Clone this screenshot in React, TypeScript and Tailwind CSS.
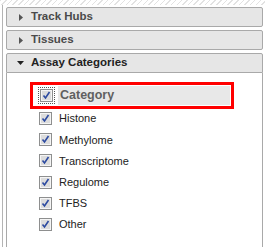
import React from 'react';

const Check: React.FC = () => (
  <svg width="13" height="13" viewBox="0 0 13 13" className="shrink-0">
    <rect x="0.5" y="0.5" width="12" height="12" fill="#f4f4f4" stroke="#8e8f8f" />
    <rect x="1.5" y="1.5" width="10" height="10" fill="#dcdcdc" stroke="#f5f5f5" />
    <path d="M3.5 6.5 L5.5 9 L9.5 3" fill="none" stroke="#2c4aa0" strokeWidth="1.6" />
  </svg>
);

const Header: React.FC<{ title: string; open?: boolean }> = ({ title, open }) => (
  <div
    className={`h-[20px] flex items-center bg-[#e6e6e6] border border-[#a9a9a9] ${
      open ? 'rounded-t-[2px]' : 'rounded-[2px]'
    }`}
  >
    <span className="w-[24px] flex justify-center pl-[3px]">
      {open ? (
        <svg width="7" height="4" viewBox="0 0 7 4">
          <path d="M0 0 H7 L3.5 4 Z" fill="#222" />
        </svg>
      ) : (
        <svg width="4" height="7" viewBox="0 0 4 7">
          <path d="M0 0 V7 L4 3.5 Z" fill="#555" />
        </svg>
      )}
    </span>
    <span
      className={`text-[11.5px] font-bold ${open ? 'text-[#222]' : 'text-[#4a4a4a]'}`}
    >
      {title}
    </span>
  </div>
);

const items = ['Histone', 'Methylome', 'Transcriptome', 'Regulome', 'TFBS', 'Other'];

export default function App() {
  return (
    <div className="w-[265px] h-[247px] overflow-hidden bg-white font-['Liberation_Sans',Arial,sans-serif]">
      <div className="h-[5px] bg-[repeating-linear-gradient(135deg,#e2e2e2_0px,#e2e2e2_1px,#ffffff_1px,#ffffff_4px)]" />
      <div className="flex h-[242px]">
        <div className="ml-[2px] w-[1px] bg-[#b4b4b4]" />
        <div className="ml-[3px] w-[257px] flex flex-col gap-[3px] pt-[2px]">
          <Header title="Track Hubs" />
          <Header title="Tissues" />
          <div className="flex flex-col flex-1">
            <Header title="Assay Categories" open />
            <div className="flex-1 border-x border-[#a9a9a9] bg-white pt-[9px] pl-[23px]">
              <div className="w-[204px] h-[27px] border-[3px] border-[#ff0000] flex items-stretch p-[1px]">
                <div className="w-[24px] flex items-center justify-center bg-white">
                  <div className="border border-dotted border-[#555] p-[1px] flex">
                    <Check />
                  </div>
                </div>
                <div className="flex-1 flex items-center bg-[#e8e8e8] pl-[2px] text-[12.5px] font-semibold text-[#606060]">
                  Category
                </div>
              </div>
              <div className="flex flex-col -mt-[1px]">
                {items.map(it => (
                  <div key={it} className="h-[21.2px] flex items-center gap-[7px] pl-[9px]">
                    <Check />
                    <span className="text-[11px] text-[#222]">{it}</span>
                  </div>
                ))}
              </div>
            </div>
          </div>
        </div>
      </div>
    </div>
  );
}
